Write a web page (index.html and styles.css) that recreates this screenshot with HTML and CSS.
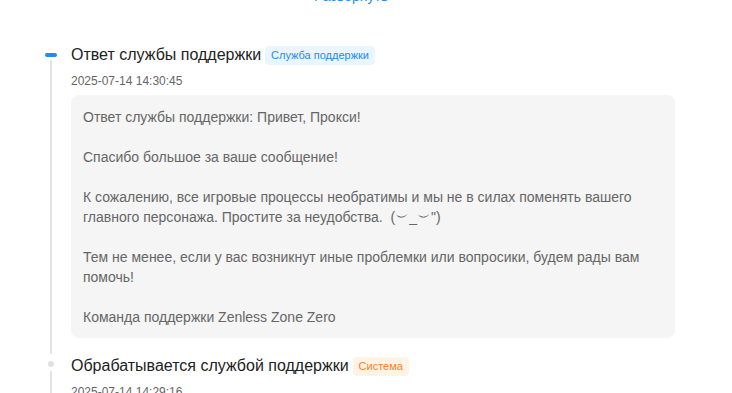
FILE: index.html
```html
<!DOCTYPE html>
<html lang="ru">
<head>
  <meta charset="UTF-8">
  <title>История обращения</title>
  <link rel="stylesheet" href="styles.css">
</head>
<body>
  <div class="page">
    <div class="more"><a href="#" class="more-link">Развернуть</a></div>

    <div class="timeline">
      <div class="item">
        <div class="rail">
          <span class="dash"></span>
          <span class="line"></span>
        </div>
        <div class="content">
          <div class="title">
            <span>Ответ службы поддержки</span>
            <span class="tag tag-blue">Служба поддержки</span>
          </div>
          <div class="date">2025-07-14 14:30:45</div>
          <div class="card">
            Ответ службы поддержки: Привет, Прокси!<br><br>
            Спасибо большое за ваше сообщение!<br><br>
            К сожалению, все игровые процессы необратимы и мы не в силах поменять вашего главного персонажа. Простите за неудобства.&nbsp; (︶_︶")<br><br>
            Тем не менее, если у вас возникнут иные проблемки или вопросики, будем рады вам помочь!<br><br>
            Команда поддержки Zenless Zone Zero
          </div>
        </div>
      </div>

      <div class="item">
        <div class="rail">
          <span class="dot"></span>
          <span class="line"></span>
        </div>
        <div class="content">
          <div class="title">
            <span>Обрабатывается службой поддержки</span>
            <span class="tag tag-orange">Система</span>
          </div>
          <div class="date">2025-07-14 14:29:16</div>
        </div>
      </div>
    </div>
  </div>
</body>
</html>
```

FILE: styles.css
```css
:root {
  --text-title: #222;
  --text-muted: #666;
  --accent: #1e8cf0;
  --rail: #e4e4e8;
  --card-bg: #f5f5f5;
}

* {
  box-sizing: border-box;
}

body {
  margin: 0;
  background: #fff;
  font-family: 'Liberation Sans', Arial, sans-serif;
  color: var(--text-title);
  overflow: hidden;
}

.page {
  padding: 0 57px 0 45px;
}

.more {
  margin-top: -14px;
  padding-left: 269px;
  line-height: 20px;
  font-size: 14px;
}

.more-link {
  color: var(--accent);
  text-decoration: none;
}

.timeline {
  margin-top: 37px;
}

.item {
  display: flex;
  gap: 14px;
  padding-bottom: 16px;
}

.rail {
  width: 12px;
  flex-shrink: 0;
  display: flex;
  flex-direction: column;
  align-items: center;
}

.dash {
  margin-top: 10px;
  width: 12px;
  height: 4px;
  border-radius: 2px;
  background: var(--accent);
}

.dash + .line {
  margin-top: 3px;
}

.dot {
  margin-top: 7px;
  width: 6px;
  height: 6px;
  border-radius: 50%;
  background: #e0e0e4;
}

.dot + .line {
  margin-top: 4px;
}

.line {
  flex: 1;
  width: 2px;
  margin-bottom: -16px;
  background: var(--rail);
}

.content {
  flex: 1;
  min-width: 0;
}

.title {
  display: flex;
  align-items: center;
  gap: 4px;
  font-size: 16px;
  line-height: 24px;
}

.tag {
  padding: 0 6px;
  height: 19px;
  line-height: 19px;
  font-size: 11px;
  border-radius: 4px;
}

.tag-blue {
  background: #eaf6ff;
  color: #1d8cf0;
}

.tag-orange {
  background: #fff3e6;
  color: #ff7d1f;
}

.date {
  margin-top: 5px;
  font-size: 12px;
  line-height: 18px;
  color: var(--text-muted);
}

.card {
  margin-top: 5px;
  padding: 12px 12px 11px;
  background: var(--card-bg);
  border-radius: 8px;
  font-size: 14px;
  line-height: 20px;
  color: var(--text-muted);
}
```
